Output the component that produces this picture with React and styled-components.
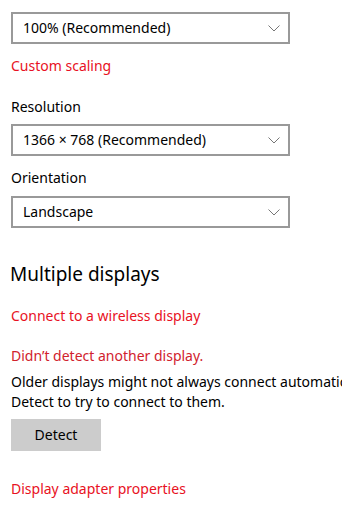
import React from 'react';
import styled, { createGlobalStyle } from 'styled-components';

const GlobalStyle = createGlobalStyle`
  html, body {
    margin: 0;
    padding: 0;
    background: #fff;
    overflow: hidden;
  }
  body {
    font-family: 'Noto Sans', 'Open Sans', sans-serif;
    font-size: 14px;
    line-height: 20px;
    color: #000;
  }
`;

const Page = styled.div`
  width: 342px;
  height: 518px;
  padding: 12px 0 0 11px;
  box-sizing: border-box;
  overflow: hidden;
`;

const Select = styled.div`
  box-sizing: border-box;
  width: 279px;
  height: 32px;
  border: 2px solid #999;
  padding: 0 8px 0 10px;
  display: flex;
  align-items: center;
  justify-content: space-between;
  margin-top: ${(p) => p.$top || 0}px;
`;

const Label = styled.div`
  margin-top: ${(p) => p.$top || 0}px;
  white-space: nowrap;
`;

const RedLink = styled.div`
  color: ${(p) => (p.$dark ? '#d1222d' : '#e81123')};
  margin-top: ${(p) => p.$top || 0}px;
  white-space: nowrap;
`;

const Heading = styled.h2`
  margin: 32px 0 0 -1px;
  font-size: 19px;
  line-height: 28px;
  font-weight: 400;
`;

const Paragraph = styled.p`
  margin: 6px 0 0;
  white-space: nowrap;
`;

const Button = styled.button`
  display: block;
  margin-top: 7px;
  width: 90px;
  height: 32px;
  border: none;
  background: #ccc;
  font: inherit;
  color: #000;
  padding: 0;
`;

function Chevron() {
  return (
    <svg width="12" height="7" viewBox="0 0 12 7">
      <polyline points="0.5,0.5 6,6 11.5,0.5" fill="none" stroke="#777" strokeWidth="1" />
    </svg>
  );
}

function Dropdown({ value, top }) {
  return (
    <Select $top={top}>
      <span>{value}</span>
      <Chevron />
    </Select>
  );
}

export default function App() {
  return (
    <>
      <GlobalStyle />
      <Page>
        <Dropdown value="100% (Recommended)" />
        <RedLink $top={12}>Custom scaling</RedLink>
        <Label $top={21}>Resolution</Label>
        <Dropdown value="1366 × 768 (Recommended)" top={7} />
        <Label $top={12}>Orientation</Label>
        <Dropdown value="Landscape" top={8} />
        <Heading>Multiple displays</Heading>
        <RedLink $top={18}>Connect to a wireless display</RedLink>
        <RedLink $top={20} $dark>Didn’t detect another display.</RedLink>
        <Paragraph>
          Older displays might not always connect automatically. Press
          <br />
          Detect to try to connect to them.
        </Paragraph>
        <Button>Detect</Button>
        <RedLink $top={28}>Display adapter properties</RedLink>
      </Page>
    </>
  );
}
